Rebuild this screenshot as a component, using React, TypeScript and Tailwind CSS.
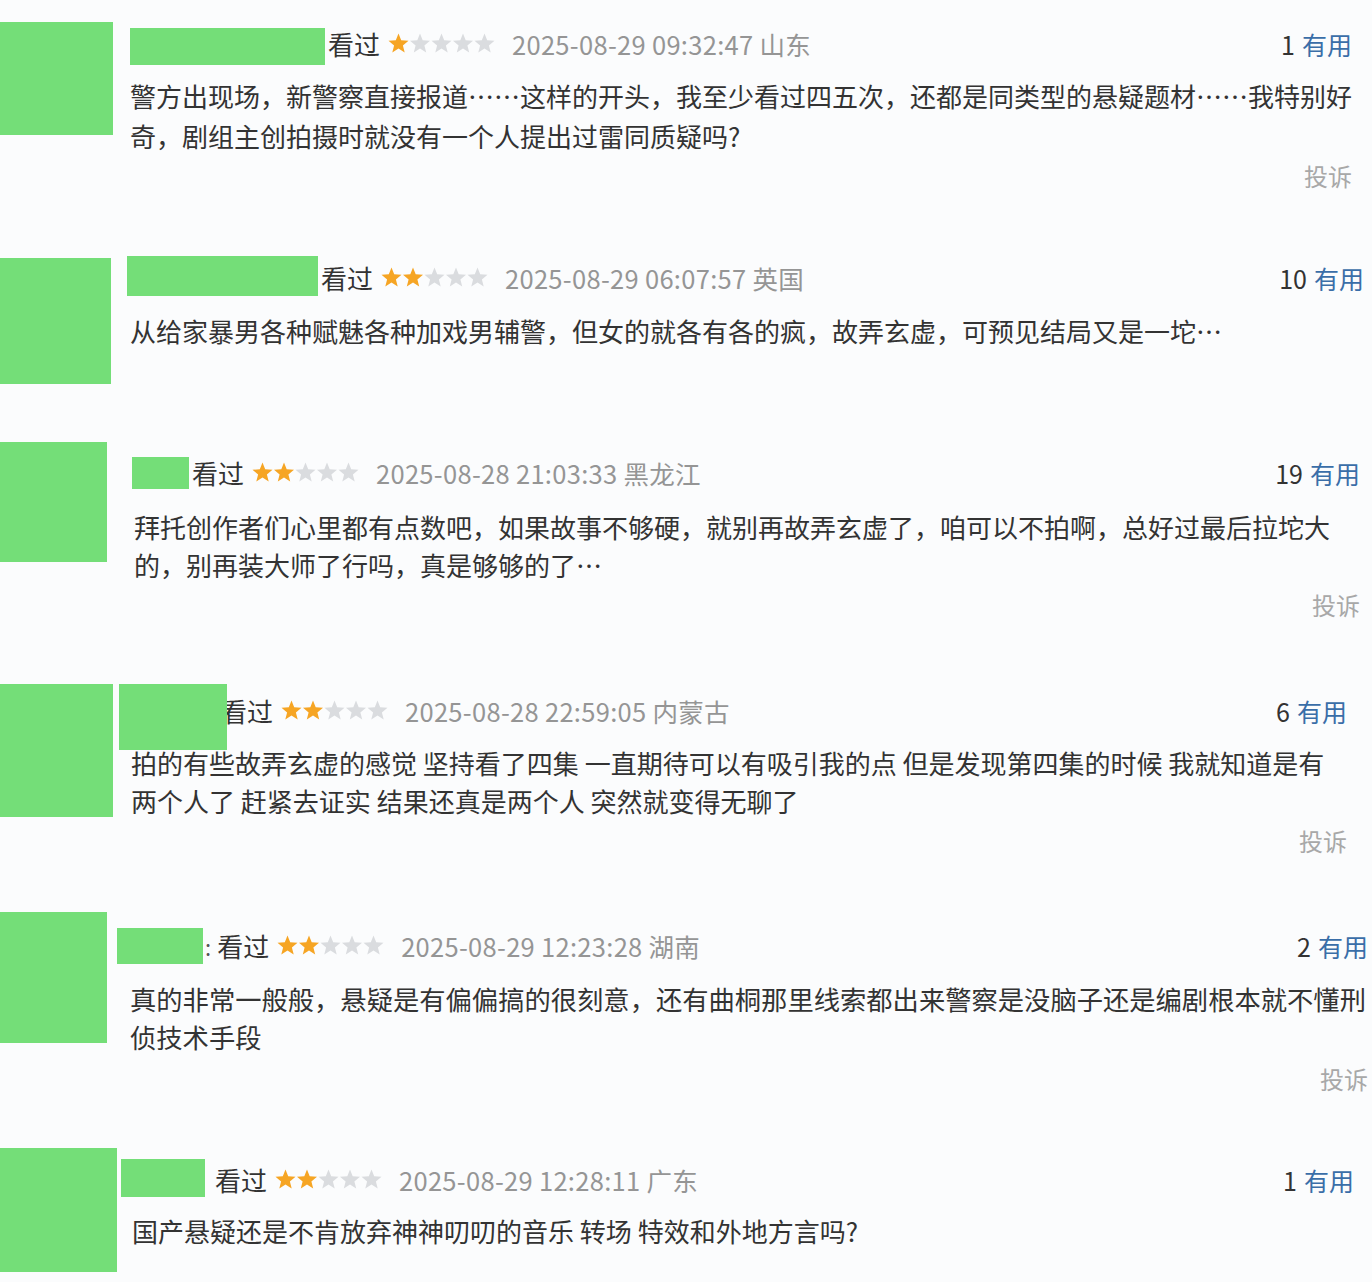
import React from 'react';

type Comment = {
  stars: number;
  date: string;
  votes: string;
  lines: string[];
  complaint: boolean;
  box: string; // block height
  avatar: string; // avatar size + offset
  header: string; // header offset + padding
  name: string; // redacted name box
  watched: string; // 看过 offset
  prefix?: string;
  body: string; // body text offset
  report: string; // 投诉 offset
};

const comments: Comment[] = [
  {
    stars: 1,
    date: '2025-08-29 09:32:47 山东',
    votes: '1',
    lines: [
      '警方出现场，新警察直接报道……这样的开头，我至少看过四五次，还都是同类型的悬疑题材……我特别好',
      '奇，剧组主创拍摄时就没有一个人提出过雷同质疑吗?',
    ],
    complaint: true,
    box: 'h-[240px]',
    avatar: 'mt-[22px] w-[113px] h-[113px]',
    header: 'mt-[24px] pl-[17px] pr-[20px]',
    name: 'mt-[4px] w-[195px] h-[37px]',
    watched: 'ml-[3px]',
    body: 'mt-[12px] pl-[17px] leading-[40px] text-[26px]',
    report: 'mt-0 pr-[20px] leading-[40px]',
  },
  {
    stars: 2,
    date: '2025-08-29 06:07:57 英国',
    votes: '10',
    lines: ['从给家暴男各种赋魅各种加戏男辅警，但女的就各有各的疯，故弄玄虚，可预见结局又是一坨…'],
    complaint: false,
    box: 'h-[185px]',
    avatar: 'mt-[18px] w-[111px] h-[126px]',
    header: 'mt-[18px] pl-[16px] pr-[8px]',
    name: 'mt-[-2px] w-[191px] h-[40px]',
    watched: 'ml-[3px]',
    body: 'mt-[13px] pl-[19px] leading-[40px] text-[26px]',
    report: '',
  },
  {
    stars: 2,
    date: '2025-08-28 21:03:33 黑龙江',
    votes: '19',
    lines: [
      '拜托创作者们心里都有点数吧，如果故事不够硬，就别再故弄玄虚了，咱可以不拍啊，总好过最后拉坨大',
      '的，别再装大师了行吗，真是够够的了…',
    ],
    complaint: true,
    box: 'h-[240px]',
    avatar: 'mt-[17px] w-[107px] h-[120px]',
    header: 'mt-[28px] pl-[25px] pr-[12px]',
    name: 'mt-[4px] w-[57px] h-[32px]',
    watched: 'ml-[3px]',
    body: 'mt-[15px] pl-[27px] leading-[38px] text-[26px]',
    report: 'mt-[2px] pr-[12px] leading-[38px]',
  },
  {
    stars: 2,
    date: '2025-08-28 22:59:05 内蒙古',
    votes: '6',
    lines: [
      '拍的有些故弄玄虚的感觉 坚持看了四集 一直期待可以有吸引我的点 但是发现第四集的时候 我就知道是有',
      '两个人了 赶紧去证实 结果还真是两个人 突然就变得无聊了',
    ],
    complaint: true,
    box: 'h-[230px]',
    avatar: 'mt-[19px] w-[113px] h-[133px]',
    header: 'mt-[26px] pl-[6px] pr-[25px]',
    name: 'mt-[-7px] w-[108px] h-[66px]',
    watched: 'ml-[-6px]',
    body: 'mt-[13px] pl-[18px] leading-[38px] text-[26px]',
    report: 'mt-[2px] pr-[25px] leading-[38px]',
  },
  {
    stars: 2,
    date: '2025-08-29 12:23:28 湖南',
    votes: '2',
    lines: [
      '真的非常一般般，悬疑是有偏偏搞的很刻意，还有曲桐那里线索都出来警察是没脑子还是编剧根本就不懂刑',
      '侦技术手段',
    ],
    complaint: true,
    box: 'h-[235px]',
    avatar: 'mt-[17px] w-[107px] h-[131px]',
    header: 'mt-[31px] pl-[10px] pr-[4px]',
    name: 'mt-[2px] w-[86px] h-[36px]',
    watched: 'ml-[6px]',
    prefix: ':',
    body: 'mt-[14px] pl-[23px] leading-[38px] text-[26.3px]',
    report: 'mt-[4px] pr-[4px] leading-[38px]',
  },
  {
    stars: 2,
    date: '2025-08-29 12:28:11 广东',
    votes: '1',
    lines: ['国产悬疑还是不肯放弃神神叨叨的音乐 转场 特效和外地方言吗?'],
    complaint: false,
    box: 'h-[152px]',
    avatar: 'mt-[18px] w-[117px] h-[124px]',
    header: 'mt-[30px] pl-[4px] pr-[18px]',
    name: 'mt-[-1px] w-[84px] h-[38px]',
    watched: 'ml-[10px]',
    body: 'mt-[12px] pl-[15px] leading-[38px] text-[26px]',
    report: '',
  },
];

const STAR_POINTS =
  '0,-10.5 2.7,-3.7 10,-3.2 4.4,1.4 6.2,8.5 0,4.6 -6.2,8.5 -4.4,1.4 -10,-3.2 -2.7,-3.7';

function Stars({ count }: { count: number }) {
  return (
    <svg width="108" height="22" viewBox="0 0 108 22" className="ml-[8px] shrink-0">
      {[0, 1, 2, 3, 4].map((i) => (
        <polygon
          key={i}
          points={STAR_POINTS}
          transform={`translate(${10.5 + i * 21.5} 11)`}
          fill={i < count ? '#f6a524' : '#dadcdf'}
        />
      ))}
    </svg>
  );
}

function CommentRow({ c }: { c: Comment }) {
  return (
    <div className={`flex ${c.box}`}>
      {/* avatar (redacted) */}
      <div className={`shrink-0 bg-[#74de78] ${c.avatar}`} />

      <div className="flex-1 min-w-0 flex flex-col">
        {/* header */}
        <div className={`flex items-center h-[40px] ${c.header}`}>
          <div className={`relative z-10 self-start shrink-0 bg-[#74de78] ${c.name}`} />
          {c.prefix && (
            <span className="ml-[2px] text-[22px] text-[#555] leading-none">{c.prefix}</span>
          )}
          <span className={`text-[26px] text-[#333] leading-none whitespace-nowrap ${c.watched}`}>
            看过
          </span>
          <Stars count={c.stars} />
          <span className="ml-[16px] text-[25.5px] tracking-[0.3px] text-[#959595] leading-none whitespace-nowrap">
            {c.date}
          </span>
          <span className="ml-auto text-[25px] leading-none whitespace-nowrap">
            <span className="text-[#333]">{c.votes}</span>
            <span className="ml-[7px] text-[#3a6ea8]">有用</span>
          </span>
        </div>

        {/* body */}
        <div className={`text-[#333] ${c.body}`}>
          {c.lines.map((line, i) => (
            <div key={i} className="whitespace-nowrap">
              {line}
            </div>
          ))}
        </div>

        {c.complaint && (
          <div className={`self-end text-[24px] text-[#a8a8a8] ${c.report}`}>投诉</div>
        )}
      </div>
    </div>
  );
}

export default function App() {
  return (
    <div
      lang="zh-CN"
      className="w-full h-[1282px] overflow-hidden bg-[#fbfcfd] font-['Noto_Sans_CJK_SC','Noto_Sans',sans-serif]"
    >
      {comments.map((c, i) => (
        <CommentRow key={i} c={c} />
      ))}
    </div>
  );
}
